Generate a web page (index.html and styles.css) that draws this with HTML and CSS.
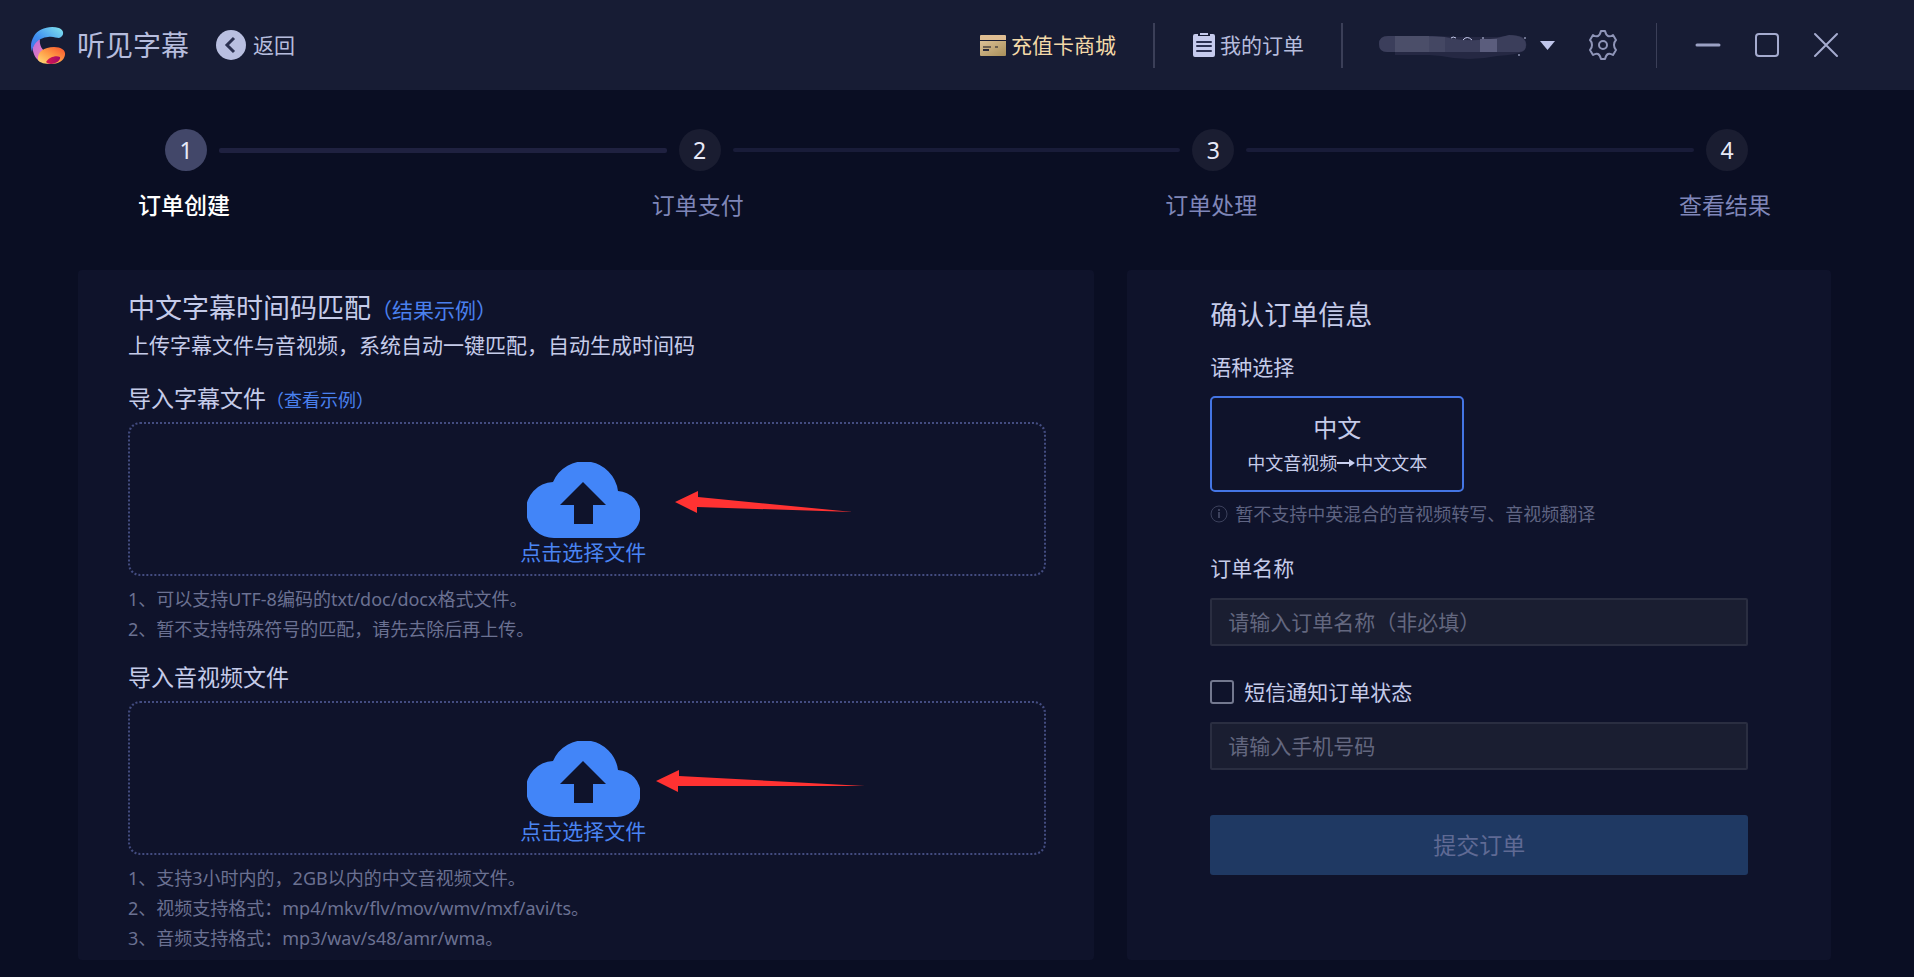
FILE: index.html
```html
<!DOCTYPE html>
<html lang="zh-CN">
<head>
	<meta charset="UTF-8">
	<meta name="viewport" content="width=device-width, initial-scale=1">
	<title>听见字幕</title>
	<link rel="stylesheet" href="styles.css">
</head>
<body>
	<header class="header">
		<div class="brand">
			<svg class="logo" width="36" height="38" viewBox="0 0 36 38">
				<defs>
					<linearGradient id="g-blue" x1="0" y1="1" x2="1" y2="0">
						<stop offset="0" stop-color="#3f6fe6"/>
						<stop offset="0.4" stop-color="#3f8ff0"/>
						<stop offset="1" stop-color="#83e6ee"/>
					</linearGradient>
					<linearGradient id="g-pink" x1="0" y1="0" x2="1" y2="1">
						<stop offset="0" stop-color="#b46fe0"/>
						<stop offset="1" stop-color="#ff7fae"/>
					</linearGradient>
					<linearGradient id="g-orange" x1="0" y1="1" x2="1" y2="0">
						<stop offset="0" stop-color="#ffe07a"/>
						<stop offset="0.5" stop-color="#ff9a45"/>
						<stop offset="1" stop-color="#f8502c"/>
					</linearGradient>
					<linearGradient id="g-red" x1="0" y1="0" x2="1" y2="0">
						<stop offset="0" stop-color="#d81a4c"/>
						<stop offset="1" stop-color="#a60a6c"/>
					</linearGradient>
				</defs>
				<path d="M10 13C5 15 2 20 3 25C4 30 7 34 11 36L17 27C12 24 9 19 10 13Z" fill="url(#g-pink)"/>
				<path d="M29 2C19 -1 8 3 4 10C1 15 0 20 2 26C3 18 8 12 18 11C23 10 26 12 29 12C34 11 35 4 29 2Z" fill="url(#g-blue)"/>
				<path d="M8 34C7 26 14 21 24 21C31 21 36 24 35 29C34 35 28 38 21 38C15 38 10 37 8 34Z" fill="url(#g-orange)"/>
				<path d="M16 36C19 31 26 29 30 31C31 34 26 38 21 38C19 38 17 37 16 36Z" fill="url(#g-red)"/>
			</svg>
			<span class="brand-name">听见字幕</span>
		</div>
		<button class="back" type="button">
			<svg width="30" height="30" viewBox="0 0 30 30">
				<circle cx="15" cy="15" r="15" fill="#b9bfe0"/>
				<path d="M18 8L11 15L18 22" fill="none" stroke="#2b3050" stroke-width="3"/>
			</svg>
			<span>返回</span>
		</button>

		<nav class="nav">
			<a class="nav-link gold" href="#">
				<svg width="26" height="21" viewBox="0 0 26 21">
					<defs>
						<linearGradient id="g-gold" x1="0" y1="0" x2="1" y2="1">
							<stop offset="0" stop-color="#dcc196"/>
							<stop offset="1" stop-color="#a88f5a"/>
						</linearGradient>
					</defs>
					<path d="M1 0H25Q26 0 26 1V5H0V1Q0 0 1 0Z" fill="#dfbd92"/>
					<path d="M0 6H26V20Q26 21 25 21H1Q0 21 0 20Z" fill="url(#g-gold)"/>
					<path d="M3 12H11M15 12H18" stroke="#6b5f50" stroke-width="2"/>
					<path d="M3 15H9" stroke="#2b2b3a" stroke-width="2"/>
				</svg>
				<span>充值卡商城</span>
			</a>
			<a class="nav-link order" href="#">
				<svg width="22" height="24" viewBox="0 0 22 24">
					<path d="M2 1H5V3H17V1H20Q22 1 22 3V22Q22 24 20 24H2Q0 24 0 22V3Q0 1 2 1Z" fill="#c6cbed"/>
					<path d="M7 0H15V2H7Z" fill="#c6cbed"/>
					<path d="M4 9H18M4 13H18M4 18H18" stroke="#2b3050" stroke-width="2" stroke-linecap="round"/>
				</svg>
				<span>我的订单</span>
			</a>
		</nav>

		<button class="user" type="button" aria-label="账号">
			<svg width="148" height="31" viewBox="0 -5 148 31">
				<path d="M9 1H54L80 2L120 2Q138 -2 145 3Q150 10 145 16Q138 20 118 21Q90 27 62 21L50 20H16V17H8Q0 16 0 9Q0 1 9 1Z" fill="#252843"/>
				<path d="M9 1H54L66 2Q90 8 118 3L130 0Q147 0 147 10Q147 17 140 17H8Q0 17 0 9Q0 1 9 1Z" fill="#3b3e5b"/>
				<path d="M16 1H50V17H16Z" fill="#4b4e69"/>
				<path d="M50 2H66V17H50Z" fill="#444763"/>
				<path d="M101 4H118V17H101Z" fill="#5b5d7d"/>
				<path d="M84 5Q88 0 93 5M72 3Q74 1 77 3M103 3H105M145 3H147M139 20H141" fill="none" stroke="#c6cbed"/>
			</svg>
			<svg class="caret" width="15" height="9" viewBox="0 0 15 9">
				<path d="M0 0H15L7.500 9Z" fill="#bfc5ea"/>
			</svg>
		</button>
		<button class="tool" type="button" aria-label="设置">
			<svg width="30" height="30" viewBox="0 0 30 30" fill="none" stroke="#8f95b8" stroke-width="2" stroke-linejoin="round">
				<path d="M13 1H17Q18 5 20 6Q22 7 25 5L28 10Q26 12 26 15Q26 18 28 20L25 25Q22 23 20 24Q18 25 17 29H13Q12 25 10 24Q8 23 5 25L2 20Q4 18 4 15Q4 12 2 10L5 5Q8 7 10 6Q12 5 13 1Z"/>
				<circle cx="15" cy="15" r="4"/>
			</svg>
		</button>
		<div class="window-tools">
			<button class="tool" type="button" aria-label="最小化">
				<svg width="26" height="26" viewBox="0 0 26 26"><path d="M2 13H24" stroke="#9ba1c4" stroke-width="3" stroke-linecap="round"/></svg>
			</button>
			<button class="tool" type="button" aria-label="最大化">
				<svg width="26" height="26" viewBox="0 0 26 26"><rect x="2" y="2" width="22" height="22" rx="3" fill="none" stroke="#a5abcf" stroke-width="2"/></svg>
			</button>
			<button class="tool" type="button" aria-label="关闭">
				<svg width="26" height="26" viewBox="0 0 26 26"><path d="M2 2L24 24M24 2L2 24" stroke="#a5abcf" stroke-width="2" stroke-linecap="round"/></svg>
			</button>
		</div>
	</header>

	<ol class="steps">
		<li class="step active">
			<div class="step-head"><span class="step-num">1</span><i class="step-line"></i></div>
			<p class="step-name">订单创建</p>
		</li>
		<li class="step">
			<div class="step-head"><span class="step-num">2</span><i class="step-line"></i></div>
			<p class="step-name">订单支付</p>
		</li>
		<li class="step">
			<div class="step-head"><span class="step-num">3</span><i class="step-line"></i></div>
			<p class="step-name">订单处理</p>
		</li>
		<li class="step">
			<div class="step-head"><span class="step-num">4</span></div>
			<p class="step-name">查看结果</p>
		</li>
	</ol>

	<main class="main">
		<section class="panel upload">
			<h1 class="title">中文字幕时间码匹配<a class="link" href="#">（结果示例）</a></h1>
			<p class="desc">上传字幕文件与音视频，系统自动一键匹配，自动生成时间码</p>

			<h2 class="subtitle">导入字幕文件<a class="link small" href="#">（查看示例）</a></h2>
			<div class="drop">
				<button class="pick" type="button">
					<svg width="113" height="77" viewBox="0 0 113 77">
						<path fill="#4285f8" fill-rule="evenodd" d="M28 76A28 28 0 0 1 26 20A34 34 0 0 1 91 29A23 23 0 0 1 89 76ZM56 20L33 43H47V62H66V43H79Z"/>
					</svg>
					<span>点击选择文件</span>
				</button>
				<svg class="arrow first" width="182" height="24" viewBox="0 0 182 24">
					<path fill="#ff3232" d="M0 11L23 0V6L178 21L22 16V22Z"/>
				</svg>
			</div>
			<ol class="notes">
				<li>1、可以支持UTF-8编码的txt/doc/docx格式文件。</li>
				<li>2、暂不支持特殊符号的匹配，请先去除后再上传。</li>
			</ol>

			<h2 class="subtitle">导入音视频文件</h2>
			<div class="drop">
				<button class="pick" type="button">
					<svg width="113" height="77" viewBox="0 0 113 77">
						<path fill="#4285f8" fill-rule="evenodd" d="M28 76A28 28 0 0 1 26 20A34 34 0 0 1 91 29A23 23 0 0 1 89 76ZM56 20L33 43H47V62H66V43H79Z"/>
					</svg>
					<span>点击选择文件</span>
				</button>
				<svg class="arrow second" width="212" height="24" viewBox="0 0 212 24">
					<path fill="#ff3232" d="M0 11L23 0V6L209 16L22 16V22Z"/>
				</svg>
			</div>
			<ol class="notes">
				<li>1、支持3小时内的，2GB以内的中文音视频文件。</li>
				<li>2、视频支持格式：mp4/mkv/flv/mov/wmv/mxf/avi/ts。</li>
				<li>3、音频支持格式：mp3/wav/s48/amr/wma。</li>
			</ol>
		</section>

		<form class="panel confirm">
			<h2 class="title">确认订单信息</h2>
			<p class="label">语种选择</p>
			<button class="lang" type="button">
				<span class="lang-name">中文</span>
				<span class="lang-desc">中文音视频<svg width="18" height="8" viewBox="0 0 18 8"><path d="M0 4H14" stroke="#c9cff0" stroke-width="2"/><path d="M12 0L18 4L12 8Z" fill="#c9cff0"/></svg>中文文本</span>
			</button>
			<p class="hint">
				<svg width="18" height="18" viewBox="0 0 18 18" fill="none" stroke="#3c415c">
					<circle cx="9" cy="9" r="8"/>
					<path d="M9 4V6M9 7V13" stroke-width="2"/>
				</svg>
				<span>暂不支持中英混合的音视频转写、音视频翻译</span>
			</p>

			<label class="label" for="order-name">订单名称</label>
			<input class="text" id="order-name" type="text" placeholder="请输入订单名称（非必填）">

			<div class="check-row">
				<input class="check" id="sms" type="checkbox">
				<label for="sms">短信通知订单状态</label>
			</div>
			<input class="text" type="tel" aria-label="手机号码" placeholder="请输入手机号码">

			<button class="submit" type="button" disabled>提交订单</button>
		</form>
	</main>
</body>
</html>
```

FILE: styles.css
```css
*{
	box-sizing: border-box;
}

body{
	margin: 0;
	min-height: 100vh;
	display: flex;
	flex-direction: column;
	background: #0a0e23;
	color: #c5cbe9;
	font: 21px/30px "Noto Sans", "Noto Sans CJK SC", sans-serif;
}

h1, h2, p, ol{
	margin: 0;
	padding: 0;
	font-weight: 400;
}

ol{
	list-style: none;
}

a{
	color: inherit;
	text-decoration: none;
}

button, input{
	font: inherit;
	color: inherit;
}

button{
	padding: 0;
	border: 0;
	background: none;
	cursor: pointer;
}

svg{
	display: block;
	flex: none;
}

/* header */
.header{
	display: flex;
	align-items: center;
	height: 90px;
	padding: 0 75px 0 30px;
	background: #171c34;
	color: #b6bcdd;
}

.brand{
	display: flex;
	align-items: center;
	gap: 11px;
}

.brand-name{
	font-size: 28px;
}

.back{
	display: flex;
	align-items: center;
	gap: 7px;
	margin-left: 27px;
}

.nav{
	display: flex;
	margin-left: auto;
}

.nav-link{
	display: flex;
	align-items: center;
	gap: 5px;
	height: 45px;
	padding-right: 37px;
	border-right: 2px solid #3b3f58;
}

.order{
	padding-left: 38px;
}

.gold{
	color: #f3d9a9;
}

.user{
	display: flex;
	align-items: center;
	gap: 13px;
	margin-left: 36px;
}

.tool{
	margin-left: 33px;
}

.window-tools{
	display: flex;
	align-items: center;
	height: 45px;
	margin-left: 38px;
	padding-left: 5px;
	border-left: 1px solid #3b3f58;
}

/* steps */
.steps{
	display: flex;
	padding: 39px 166px 0 165px;
}

.step{
	flex: 1;
	color: #7f86b8;
}

.step:last-child{
	flex: none;
	width: 42px;
}

.step-head{
	display: flex;
	align-items: center;
}

.step-num{
	width: 42px;
	border-radius: 50%;
	background: #1a1d31;
	color: #e8eaf8;
	font-size: 23px;
	line-height: 42px;
	text-align: center;
}

.step-line{
	flex: 1;
	height: 4px;
	margin: 0 12px;
	border-radius: 2px;
	background: #191c39;
}

.step-name{
	margin: 19px 0 0 -27px;
	font-size: 23px;
	white-space: nowrap;
}

.active{
	color: #fff;
}

.active .step-num{
	background: #424769;
}

.active .step-line{
	height: 5px;
	background: #1f2140;
}

.active .step-name{
	font-weight: 500;
}

/* panels */
.main{
	flex: 1;
	display: grid;
	grid-template-columns: 13fr 9fr;
	gap: 33px;
	padding: 50px 83px 17px 78px;
}

.panel{
	border-radius: 4px;
	background: #0f132b;
}

.upload{
	padding: 18px 48px 0 50px;
}

.title{
	font-size: 27px;
	line-height: 40px;
}

.link{
	color: #4a80ee;
	font-size: 21px;
	line-height: 1;
}

.small{
	font-size: 18px;
}

.desc{
	margin: 2px 0 23px;
}

.subtitle{
	margin-top: 18px;
	font-size: 23px;
}

.drop{
	position: relative;
	display: flex;
	justify-content: center;
	height: 154px;
	margin-top: 9px;
	padding: 38px 8px 0 0;
	border: 2px dotted #434c80;
	border-radius: 12px;
}

.pick{
	display: flex;
	flex-direction: column;
	align-items: center;
	align-self: flex-start;
	color: #4a84f2;
	line-height: 26px;
}

.arrow{
	position: absolute;
	top: 67px;
}

.first{
	left: calc(50% + 88px);
}

.second{
	left: calc(50% + 69px);
}

.notes{
	margin-top: 8px;
	color: #6b7192;
	font-size: 18px;
}

/* order form */
.confirm{
	display: flex;
	flex-direction: column;
	align-items: stretch;
	padding: 25px 83px 0;
}

.label{
	margin-top: 17px;
}

.lang{
	display: flex;
	flex-direction: column;
	align-items: center;
	justify-content: center;
	gap: 5px;
	align-self: flex-start;
	width: 254px;
	height: 96px;
	margin-top: 14px;
	padding-top: 3px;
	border: 2px solid #4475e4;
	border-radius: 5px;
}

.lang-name{
	font-size: 24px;
}

.lang-desc{
	display: flex;
	align-items: center;
	font-size: 18px;
}

.hint{
	display: flex;
	align-items: center;
	gap: 7px;
	margin: 7px 0;
	color: #5f6482;
	font-size: 18px;
}

.text{
	width: 100%;
	height: 48px;
	margin-top: 15px;
	padding: 0 16px;
	border: 2px solid #2a2e41;
	border-radius: 2px;
	background: #1a1e31;
	outline: none;
}

.text::placeholder{
	color: #63677f;
	opacity: 1;
}

.check-row{
	display: flex;
	align-items: center;
	gap: 10px;
	margin-top: 31px;
}

.check{
	appearance: none;
	width: 24px;
	height: 24px;
	margin: 0;
	border: 2px solid #73788f;
	border-radius: 3px;
}

.check:checked{
	background: #4475e4;
}

.submit{
	height: 60px;
	margin-top: 45px;
	border-radius: 3px;
	background: #1f3963;
	color: #5f6a94;
	font-size: 23px;
}
```
